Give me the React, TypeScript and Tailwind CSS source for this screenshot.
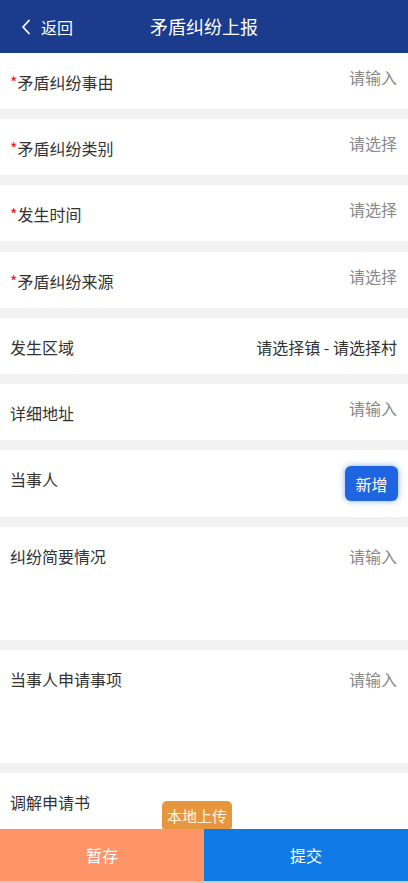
const FONT = { fontFamily: '"Noto Sans CJK SC", "Noto Sans", sans-serif' };

type Field = {
  label: string;
  required?: boolean;
  hint?: string;
};

const fields: Field[] = [
  { label: "矛盾纠纷事由", required: true, hint: "请输入" },
  { label: "矛盾纠纷类别", required: true, hint: "请选择" },
  { label: "发生时间", required: true, hint: "请选择" },
  { label: "矛盾纠纷来源", required: true, hint: "请选择" },
];

function Label({ text, required }: { text: string; required?: boolean }) {
  return (
    <p className="text-[16px] leading-[22px] text-[#333]">
      {required && <span className="text-[#e02222]">*</span>}
      {text}
    </p>
  );
}

function ShortRow({ field }: { field: Field }) {
  return (
    <div className="flex h-[56px] shrink-0 items-start justify-between bg-white pl-[10px] pr-[11px]">
      <div className="pt-[18px]">
        <Label text={field.label} required={field.required} />
      </div>
      <p className="pt-[13px] text-[16px] leading-[22px] text-[#888]">{field.hint}</p>
    </div>
  );
}

function TallRow({ label }: { label: string }) {
  return (
    <div className="flex h-[112.5px] shrink-0 items-start justify-between bg-white pl-[10px] pr-[11px] pt-[18px]">
      <Label text={label} />
      <p className="text-[16px] leading-[22px] text-[#888]">请输入</p>
    </div>
  );
}

export default function App() {
  return (
    <div className="flex h-[883px] w-full flex-col overflow-hidden bg-[#f2f2f2]" style={FONT}>
      <header className="relative flex h-[53px] shrink-0 items-center bg-[#1b3b8c] text-white">
        <div className="flex items-center pl-[20px]">
          <svg width="12" height="16" viewBox="0 0 12 16" fill="none">
            <polyline points="9,1.5 3,8 9,14.5" stroke="white" strokeWidth="1.8" strokeLinecap="round" strokeLinejoin="round" />
          </svg>
          <span className="ml-[9px] text-[16px] leading-[22px]">返回</span>
        </div>
        <h1 className="pointer-events-none absolute inset-x-0 top-[13px] text-center text-[18px] leading-[26px]">
          矛盾纠纷上报
        </h1>
      </header>

      <main className="flex min-h-0 flex-1 flex-col gap-[10.2px] overflow-hidden">
        {fields.map((f) => (
          <ShortRow key={f.label} field={f} />
        ))}

        <div className="flex h-[56px] shrink-0 items-start justify-between bg-white pl-[10px] pr-[11px]">
          <div className="pt-[18px]">
            <Label text="发生区域" />
          </div>
          <p className="pt-[18px] text-[16px] leading-[22px] text-[#333]">请选择镇 - 请选择村</p>
        </div>

        <ShortRow field={{ label: "详细地址", hint: "请输入" }} />

        <div className="flex h-[67px] shrink-0 items-start justify-between bg-white pl-[10px] pr-[10px]">
          <div className="pt-[18px]">
            <Label text="当事人" />
          </div>
          <button className="mt-[16px] h-[35px] w-[53px] rounded-[6px] bg-[#1f64e0] text-[16px] text-white shadow-[0_0_6px_rgba(31,100,224,0.55)]">
            新增
          </button>
        </div>

        <TallRow label="纠纷简要情况" />
        <TallRow label="当事人申请事项" />

        <div className="flex h-[90px] shrink-0 items-start bg-white pl-[10px]">
          <div className="pt-[18px]">
            <Label text="调解申请书" />
          </div>
          <span className="ml-[72px] mt-[28px] rounded-t-[5px] rounded-b-[2px] bg-[#e8963e] px-[5px] pt-[2px] text-[15px] leading-[26px] text-[#fff6e6]">
            本地上传
          </span>
        </div>
      </main>

      <footer className="shrink-0 bg-[#c9c9c9] pb-[2px]">
        <div className="grid h-[52px] grid-cols-2 text-[16px] text-white">
          <button className="bg-[#fe9468]">暂存</button>
          <button className="bg-[#0f7ae6]">提交</button>
        </div>
      </footer>
    </div>
  );
}
